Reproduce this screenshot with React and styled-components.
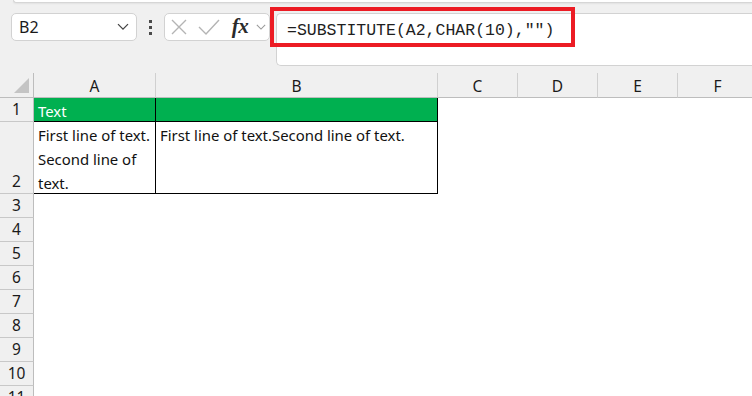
import React from 'react'
import styled, { createGlobalStyle } from 'styled-components'

const GlobalStyle = createGlobalStyle`
    html, body {
        margin: 0;
        background: #f0f0f0;
        overflow: hidden;
    }
    #root {
        width: 752px;
        height: 396px;
        position: relative;
        overflow: hidden;
    }
`

const Page = styled.div`
    width: 752px;
    height: 396px;
    background: #f0f0f0;
    font-family: "Noto Sans", "Liberation Sans", sans-serif;
    position: relative;
    overflow: hidden;
`

const RibbonEdge = styled.div`
    height: 2px;
    margin-left: 13px;
    background: #fff;
    border: 1px solid #d6d6d6;
    border-top: none;
    border-right: none;
    border-bottom-left-radius: 6px;
    box-shadow: 0 1px 2px rgba(0,0,0,.06);
`

const FormulaRow = styled.div`
    display: flex;
    align-items: flex-start;
    padding: 10px 0 0 11px;
    height: 60px;
    box-sizing: border-box;
`

const Box = styled.div`
    background: #fff;
    border: 1px solid #d2d2d2;
    border-radius: 5px;
    height: 28px;
    box-sizing: border-box;
    display: flex;
    align-items: center;
`

const NameBox = styled(Box)`
    width: 126px;
    padding: 0 7px 0 7px;
    justify-content: space-between;
    font-size: 16px;
    color: #1a1a1a;
`

const Dots = styled.div`
    width: 27px;
    height: 28px;
    display: flex;
    flex-direction: column;
    align-items: center;
    justify-content: center;
    gap: 3px;
    & > span {
        width: 3px;
        height: 3px;
        background: #4a4a4a;
    }
`

const ButtonsBox = styled(Box)`
    width: 106px;
    padding: 0 0 0 6px;
`

const IconSlot = styled.div`
    width: ${p => p.w}px;
    margin-left: ${p => p.lead || 0}px;
    height: 26px;
    display: flex;
    align-items: center;
    justify-content: center;
`

const Fx = styled.span`
    font-family: "Liberation Serif", "DejaVu Serif", serif;
    font-style: italic;
    font-weight: bold;
    font-size: 21px;
    color: #2a2a2a;
    letter-spacing: -0.5px;
    margin-top: -2px;
`

const FormulaBar = styled.div`
    margin-left: 6px;
    flex: 1;
    height: 53px;
    background: #fff;
    border: 1px solid #d2d2d2;
    border-right: none;
    border-radius: 5px 0 0 5px;
    box-sizing: border-box;
    padding: 5px 0 0 10px;
    font-family: "Liberation Mono", "DejaVu Sans Mono", monospace;
    font-size: 16.5px;
    line-height: 24px;
    color: #1e1e1e;
`

const Highlight = styled.div`
    position: absolute;
    left: 270px;
    top: 7px;
    width: 305px;
    height: 40px;
    box-sizing: border-box;
    border: 4px solid #ec1c24;
    pointer-events: none;
`

const Sheet = styled.div`
    margin-top: 10px;
    display: grid;
    grid-template-columns: 34px 122px 282px repeat(4, 80px);
    grid-template-rows: 25px 24px 72px;
    grid-auto-rows: 24px;
    font-family: "Noto Sans", "Liberation Sans", sans-serif;
    font-size: 14.9px;
`

const Corner = styled.div`
    background: #f0f0f0;
    border-right: 1px solid #bdbdbd;
    border-bottom: 1px solid #bdbdbd;
    box-sizing: border-box;
    position: relative;
    &::after {
        content: '';
        position: absolute;
        right: 4px;
        bottom: 4px;
        border-style: solid;
        border-width: 0 0 15px 15px;
        border-color: transparent transparent #c4c4c4 transparent;
    }
`

const ColHead = styled.div`
    background: #f0f0f0;
    border-right: 1px solid #d0d0d0;
    border-bottom: 1px solid #bdbdbd;
    box-sizing: border-box;
    display: flex;
    align-items: center;
    justify-content: center;
    color: #1a1a1a;
    font-size: 15.5px;
    padding-top: 2px;
`

const RowHead = styled.div`
    background: #f0f0f0;
    border-right: 1px solid #bdbdbd;
    border-bottom: 1px solid #c8c8c8;
    box-sizing: border-box;
    display: flex;
    align-items: flex-end;
    justify-content: center;
    padding-bottom: 1px;
    line-height: 22px;
    font-size: 15.5px;
    color: #1a1a1a;
`

const Cell = styled.div`
    box-sizing: border-box;
    background: ${p => (p.fill ? '#00b050' : '#fff')};
    color: ${p => (p.fill ? '#fff' : '#111')};
    border-right: 1px solid ${p => (p.edge ? '#000' : 'transparent')};
    border-bottom: 1px solid ${p => (p.edge ? '#000' : 'transparent')};
    padding: 1px 3px 0 4px;
    line-height: 24px;
    white-space: ${p => (p.wrap ? 'normal' : 'nowrap')};
    overflow: visible;
`

const cols = ['A', 'B', 'C', 'D', 'E', 'F']

const Chevron = ({ size = 12, color = '#444' }) => (
    <svg width={size} height={size * 0.6} viewBox="0 0 12 7">
        <path d="M1 1 L6 6 L11 1" fill="none" stroke={color} strokeWidth="1.3" />
    </svg>
)

export default function App() {
    const emptyRows = [3, 4, 5, 6, 7, 8, 9, 10, 11]
    return <Page>
        <GlobalStyle />
        <RibbonEdge />
        <FormulaRow>
            <NameBox>
                <span>B2</span>
                <Chevron />
            </NameBox>
            <Dots><span /><span /><span /></Dots>
            <ButtonsBox>
                <IconSlot w={16}>
                    <svg width="16" height="16" viewBox="0 0 16 16">
                        <path d="M1 1 L15 15 M15 1 L1 15" stroke="#b4b4b4" strokeWidth="1.4" fill="none" />
                    </svg>
                </IconSlot>
                <IconSlot w={22} lead={11}>
                    <svg width="22" height="16" viewBox="0 0 22 16">
                        <path d="M1 8 L8 15 L21 1" stroke="#b4b4b4" strokeWidth="1.4" fill="none" />
                    </svg>
                </IconSlot>
                <IconSlot w={20} lead={10}><Fx>fx</Fx></IconSlot>
                <IconSlot w={12} lead={5}><Chevron size={10} color="#9a9a9a" /></IconSlot>
            </ButtonsBox>
            <FormulaBar>=SUBSTITUTE(A2,CHAR(10),"")</FormulaBar>
        </FormulaRow>
        <Highlight />
        <Sheet>
            <Corner />
            {cols.map(c => <ColHead key={c}>{c}</ColHead>)}

            <RowHead>1</RowHead>
            <Cell fill edge>Text</Cell>
            <Cell fill edge />
            <Cell /><Cell /><Cell /><Cell />

            <RowHead>2</RowHead>
            <Cell edge wrap>First line of text. Second line of text.</Cell>
            <Cell edge>First line of text.Second line of text.</Cell>
            <Cell /><Cell /><Cell /><Cell />

            {emptyRows.map(r => <React.Fragment key={r}>
                <RowHead>{r}</RowHead>
                <Cell /><Cell /><Cell /><Cell /><Cell /><Cell />
            </React.Fragment>)}
        </Sheet>
    </Page>
}
